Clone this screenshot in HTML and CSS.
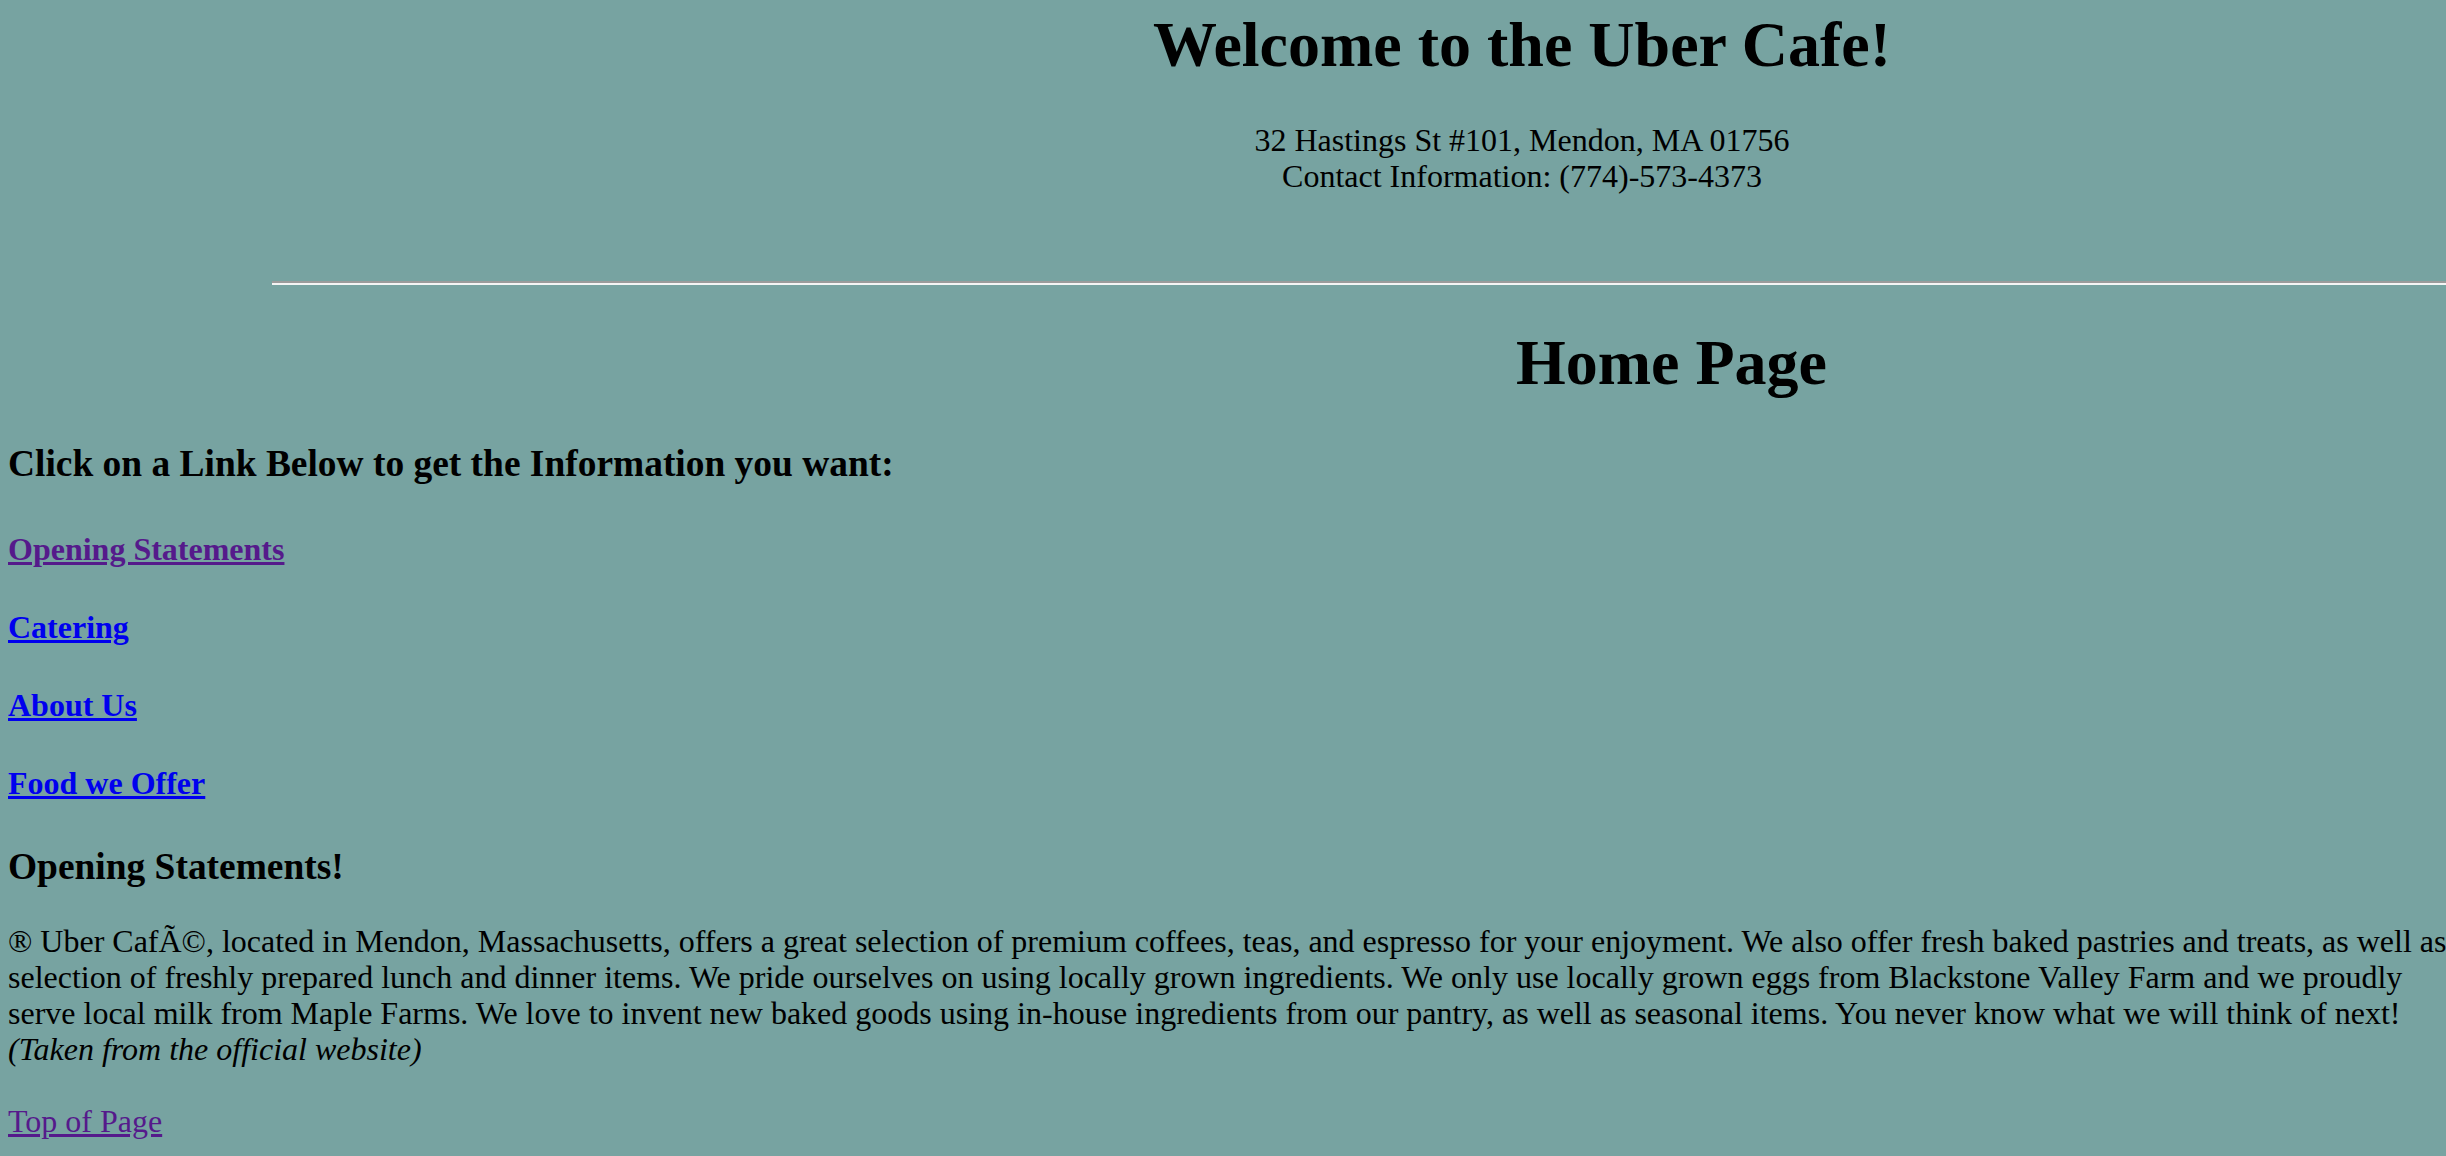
FILE: index.html
```html
<!DOCTYPE html>
<html lang="en">
<head>
<meta charset="utf-8">
<title>Uber Cafe - Home Page</title>
<link rel="stylesheet" href="styles.css">
</head>
<body>
<header class="masthead">
  <h1 class="masthead-title">Welcome to the Uber Cafe!</h1>
  <p class="masthead-address">32 Hastings St #101, Mendon, MA 01756<br>Contact Information: (774)-573-4373</p>
</header>
<hr class="rule">
<h1 class="page-title">Home Page</h1>
<main class="content">
  <h3 class="prompt">Click on a Link Below to get the Information you want:</h3>
  <nav class="links">
    <h4 class="link-item"><a class="link visited" href="#opening">Opening Statements</a></h4>
    <h4 class="link-item"><a class="link" href="#catering">Catering</a></h4>
    <h4 class="link-item"><a class="link" href="#about">About Us</a></h4>
    <h4 class="link-item"><a class="link" href="#food">Food we Offer</a></h4>
  </nav>
  <section class="section" id="opening">
    <h3 class="section-title">Opening Statements!</h3>
    <p class="section-text">® Uber CafÃ©, located in Mendon, Massachusetts, offers a great selection of premium coffees, teas, and espresso for your enjoyment. We also offer fresh baked pastries and treats, as well as a<br>selection of freshly prepared lunch and dinner items. We pride ourselves on using locally grown ingredients. We only use locally grown eggs from Blackstone Valley Farm and we proudly<br>serve local milk from Maple Farms. We love to invent new baked goods using in-house ingredients from our pantry, as well as seasonal items. You never know what we will think of next!<br><i>(Taken from the official website)</i></p>
    <p class="top-link"><a class="link visited" href="#">Top of Page</a></p>
  </section>
</main>
</body>
</html>
```
FILE: styles.css
```css
html {
  overflow: hidden;
}

body {
  margin: 0;
  background: #77a3a1;
  color: #000;
  font-family: "Liberation Serif", "Times New Roman", serif;
  font-size: 32px;
}

.masthead {
  padding-top: 9px;
  padding-left: 598px;
  text-align: center;
}

.masthead-title {
  margin: 0;
  font-size: 64px;
  line-height: 72px;
  font-weight: bold;
}

.masthead-address {
  margin: 41px 0 0;
  font-size: 32px;
  line-height: 36px;
}

.rule {
  height: 0;
  margin: 87px 0 0 272px;
  border: none;
  border-top: 2px solid #9b9b9b;
  border-bottom: 2px solid #f4f4f4;
}

.page-title {
  margin: 42px 0 0;
  padding-left: 897px;
  text-align: center;
  font-size: 64px;
  line-height: 72px;
  font-weight: bold;
}

.content {
  padding-left: 8px;
}

.prompt {
  margin: 44px 0 0;
  font-size: 37.44px;
  line-height: 42px;
  font-weight: bold;
}

.links {
  display: flex;
  flex-direction: column;
  gap: 42.33px;
  margin-top: 45.5px;
}

.link-item {
  margin: 0;
  font-size: 32px;
  line-height: 36px;
  font-weight: bold;
}

.link {
  color: #0000ee;
  text-decoration: underline;
}

.link.visited {
  color: #551a8b;
}

.section-title {
  margin: 44.2px 0 0;
  font-size: 37.44px;
  line-height: 42px;
  font-weight: bold;
}

.section-text {
  margin: 35.5px 0 0;
  font-size: 32px;
  line-height: 36px;
  white-space: nowrap;
}

.top-link {
  margin: 36.3px 0 0;
  font-size: 32px;
  line-height: 36px;
}
```
